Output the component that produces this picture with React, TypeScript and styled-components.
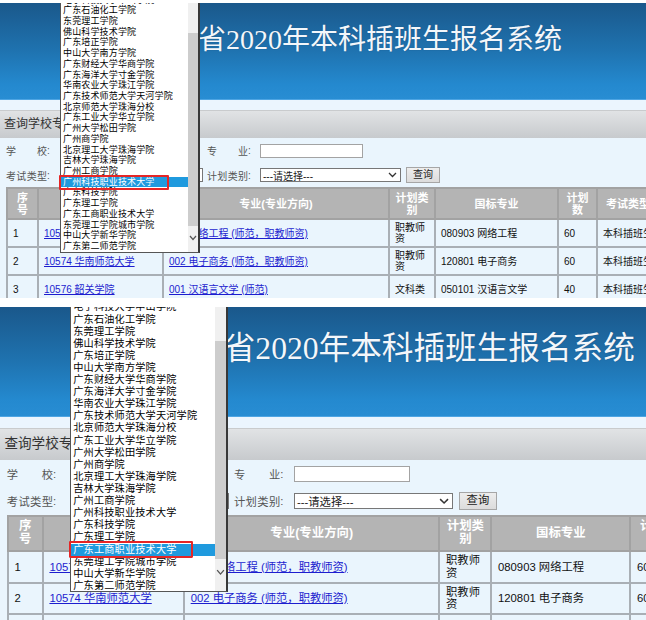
import React from 'react';
import styled, { createGlobalStyle } from 'styled-components';

const GlobalStyle = createGlobalStyle`
  html, body {
    margin: 0;
    padding: 0;
    background: #fff;
  }
  body {
    width: 646px;
    height: 620px;
    overflow: hidden;
    font-family: "Liberation Sans", "Noto Sans CJK SC", sans-serif;
  }
`;

const schools = [
    '电子科技大学中山学院', '广东石油化工学院', '东莞理工学院', '佛山科学技术学院',
    '广东培正学院', '中山大学南方学院', '广东财经大学华商学院', '广东海洋大学寸金学院',
    '华南农业大学珠江学院', '广东技术师范大学天河学院', '北京师范大学珠海分校',
    '广东工业大学华立学院', '广州大学松田学院', '广州商学院', '北京理工大学珠海学院',
    '吉林大学珠海学院', '广州工商学院', '广州科技职业技术大学', '广东科技学院',
    '广东理工学院', '广东工商职业技术大学', '东莞理工学院城市学院', '中山大学新华学院',
    '广东第二师范学院',
];

const ITEM_H = 10.72;

interface Row {
    no: string;
    school: string;
    major: string;
    kind: string;
    std: string;
    count: string;
    exam: string;
}

const rows: Row[] = [
    { no: '1', school: '10574 华南师范大学', major: '001 网络工程 (师范，职教师资)', kind: '职教师资', std: '080903 网络工程', count: '60', exam: '本科插班生' },
    { no: '2', school: '10574 华南师范大学', major: '002 电子商务 (师范，职教师资)', kind: '职教师资', std: '120801 电子商务', count: '60', exam: '本科插班生' },
    { no: '3', school: '10576 韶关学院', major: '001 汉语言文学 (师范)', kind: '文科类', std: '050101 汉语言文学', count: '40', exam: '本科插班生' },
];

const colWidths = [31, 125, 226, 46, 123, 39, 62];

const Shot = styled.div<{ $zoom: number; $top: number; $h: number }>`
    position: relative;
    zoom: ${p => p.$zoom};
    margin-top: ${p => p.$top}px;
    width: ${p => 646 / p.$zoom}px;
    height: ${p => p.$h}px;
    overflow: hidden;
    background: #eaf5fd;
`;

const Banner = styled.div`
    height: 97px;
    box-sizing: border-box;
    border-bottom: 1px solid #4ea5e3;
    background: linear-gradient(180deg, #1a588b 0%, #1f73b0 50%, #2489cf 85%, #288dd3 100%);
    padding: 23px 0 0 142px;
`;

const Title = styled.h1`
    margin: 0;
    font-family: "Liberation Serif", "Noto Sans CJK SC", serif;
    font-weight: normal;
    font-size: 28px;
    line-height: 28px;
    color: #f3f7fb;
    white-space: nowrap;
    text-shadow: 0 0 1px rgba(20, 50, 90, 0.6);
`;

const Strip = styled.div`
    height: 10px;
    background: #ebf5fe;
`;

const CaptionBar = styled.div`
    height: 28px;
    border-top: 1px solid #c9cbcd;
    box-sizing: border-box;
    background: linear-gradient(180deg, #e1e3e5, #c7cacd);
    padding-left: 4px;
    font-size: 12px;
    line-height: 27px;
    color: #333;
    white-space: nowrap;
`;

const Form = styled.div`
    padding-left: 6px;
    height: 49px;
`;

const FormRow = styled.div<{ $h: number }>`
    display: grid;
    grid-template-columns: 56px 145px 53px auto;
    align-items: center;
    height: ${p => p.$h}px;
`;

const Label = styled.div`
    display: flex;
    align-items: center;
    font-size: 10px;
    color: #555;
    white-space: nowrap;
`;

const Spread = styled.span`
    display: inline-block;
    width: 41px;
    text-align: justify;
    text-align-last: justify;
`;

const FakeSelect = styled.div<{ $w: number }>`
    display: flex;
    align-items: center;
    justify-content: space-between;
    width: ${p => p.$w}px;
    height: 14px;
    box-sizing: border-box;
    border: 1px solid #777;
    background: #fff;
    padding: 0 3px 0 2px;
    font-size: 10px;
    color: #222;
    white-space: nowrap;
`;

const TextInput = styled.div`
    width: 103px;
    height: 14px;
    box-sizing: border-box;
    border: 1px solid #a3a3a3;
    background: #fff;
`;

const Controls = styled.div`
    display: flex;
    align-items: center;
    gap: 5px;
`;

const Button = styled.div`
    width: 34px;
    height: 16px;
    box-sizing: border-box;
    border: 1px solid #a6a6a6;
    background: linear-gradient(#ededed, #dcdcdc);
    font-size: 10px;
    line-height: 14px;
    text-align: center;
    color: #222;
`;

const Table = styled.table`
    margin-left: 6px;
    width: 652px;
    table-layout: fixed;
    border-collapse: collapse;
`;

const Th = styled.th`
    height: 31px;
    box-sizing: border-box;
    padding: 0 5px;
    border: 2px solid #a2a2a2;
    background: #b4b4b4;
    color: #fff;
    font-size: 11px;
    line-height: 12px;
    font-weight: bold;
    text-align: center;
`;

const Td = styled.td`
    height: 28px;
    box-sizing: border-box;
    padding: 0 5px;
    border: 2px solid #a9afb5;
    background: #eaf5fd;
    font-size: 10px;
    line-height: 11px;
    color: #111;
    overflow: hidden;
`;

const Link = styled.a`
    color: #1d1dcf;
    text-decoration: underline;
    white-space: nowrap;
`;

const Dropdown = styled.div<{ $left: number; $h: number }>`
    position: absolute;
    top: 0;
    left: ${p => p.$left}px;
    width: 140px;
    height: ${p => p.$h}px;
    box-sizing: border-box;
    display: flex;
    border-left: 1px solid #555;
    border-right: 2px solid #383838;
    border-bottom: 1px solid #555;
    background: #fff;
`;

const List = styled.div`
    position: relative;
    flex: 1;
    overflow: hidden;
`;

const Items = styled.div<{ $offset: number }>`
    margin-top: ${p => p.$offset}px;
`;

const Item = styled.div<{ $sel?: boolean }>`
    height: ${ITEM_H}px;
    line-height: ${ITEM_H}px;
    padding-left: 2px;
    font-size: 9px;
    letter-spacing: 0.15px;
    white-space: nowrap;
    color: ${p => (p.$sel ? '#fff' : '#000')};
    background: ${p => (p.$sel ? '#1f9ade' : 'transparent')};
`;

const Scrollbar = styled.div`
    position: relative;
    width: 10px;
    background: #f0f0f0;
`;

const Thumb = styled.div`
    position: absolute;
    top: 30px;
    left: 0;
    right: 0;
    height: 193px;
    background: #cdcdcd;
`;

const DownArrow = styled.svg`
    position: absolute;
    left: 1px;
    top: 232px;
`;

const RedMark = styled.div<{ $top: number }>`
    position: absolute;
    left: -2px;
    top: ${p => p.$top}px;
    width: 110px;
    height: 15px;
    box-sizing: border-box;
    border: 2px solid #e52626;
    border-radius: 1px;
`;

const Chevron = () => (
    <svg width="9" height="6" viewBox="0 0 9 6">
        <path d="M1 1l3.5 3.5L8 1" fill="none" stroke="#333" strokeWidth="1.3" />
    </svg>
);

interface ScreenProps {
    zoom: number;
    top: number;
    height: number;
    dropLeft: number;
    dropHeight: number;
    offset: number;
    selected: number;
}

const Screen: React.FC<ScreenProps> = (props) => {
    const markTop = props.offset + props.selected * ITEM_H - 2.2;
    return (
        <Shot $zoom={props.zoom} $top={props.top} $h={props.height}>
            <Banner>
                <Title>广东省2020年本科插班生报名系统</Title>
            </Banner>
            <Strip />
            <CaptionBar>查询学校专业计划</CaptionBar>
            <Form>
                <FormRow $h={25}>
                    <Label><Spread>学校</Spread>:</Label>
                    <FakeSelect $w={136}>---请选择---<Chevron /></FakeSelect>
                    <Label><Spread>专业</Spread>:</Label>
                    <TextInput />
                </FormRow>
                <FormRow $h={24}>
                    <Label><Spread>考试类型</Spread>:</Label>
                    <FakeSelect $w={141}>---请选择---<Chevron /></FakeSelect>
                    <Label><Spread>计划类别</Spread>:</Label>
                    <Controls>
                        <FakeSelect $w={141}>---请选择---<Chevron /></FakeSelect>
                        <Button>查询</Button>
                    </Controls>
                </FormRow>
            </Form>
            <Table>
                <colgroup>
                    {colWidths.map((w, i) => <col key={i} style={{ width: w }} />)}
                </colgroup>
                <thead>
                    <tr>
                        <Th>序号</Th>
                        <Th>招生院校</Th>
                        <Th>专业(专业方向)</Th>
                        <Th>计划类别</Th>
                        <Th>国标专业</Th>
                        <Th>计划数</Th>
                        <Th>考试类型</Th>
                    </tr>
                </thead>
                <tbody>
                    {rows.map(r => (
                        <tr key={r.no}>
                            <Td>{r.no}</Td>
                            <Td><Link>{r.school}</Link></Td>
                            <Td><Link>{r.major}</Link></Td>
                            <Td>{r.kind}</Td>
                            <Td>{r.std}</Td>
                            <Td>{r.count}</Td>
                            <Td>{r.exam}</Td>
                        </tr>
                    ))}
                </tbody>
            </Table>
            <Dropdown $left={props.dropLeft} $h={props.dropHeight}>
                <List>
                    <Items $offset={props.offset}>
                        {schools.map((s, i) => (
                            <Item key={s} $sel={i === props.selected}>{s}</Item>
                        ))}
                    </Items>
                </List>
                <Scrollbar>
                    <Thumb />
                    <DownArrow width="8" height="6" viewBox="0 0 8 6">
                        <path d="M1 1l3 3.5L7 1" fill="none" stroke="#555" strokeWidth="1.2" />
                    </DownArrow>
                </Scrollbar>
                <RedMark $top={markTop} />
            </Dropdown>
        </Shot>
    );
};

export default function App() {
    return (
        <>
            <GlobalStyle />
            <Screen zoom={1} top={3} height={295} dropLeft={60} dropHeight={250} offset={-8.5} selected={17} />
            <Screen zoom={1.13} top={8} height={277} dropLeft={62} dropHeight={252} offset={-5} selected={20} />
        </>
    );
}
